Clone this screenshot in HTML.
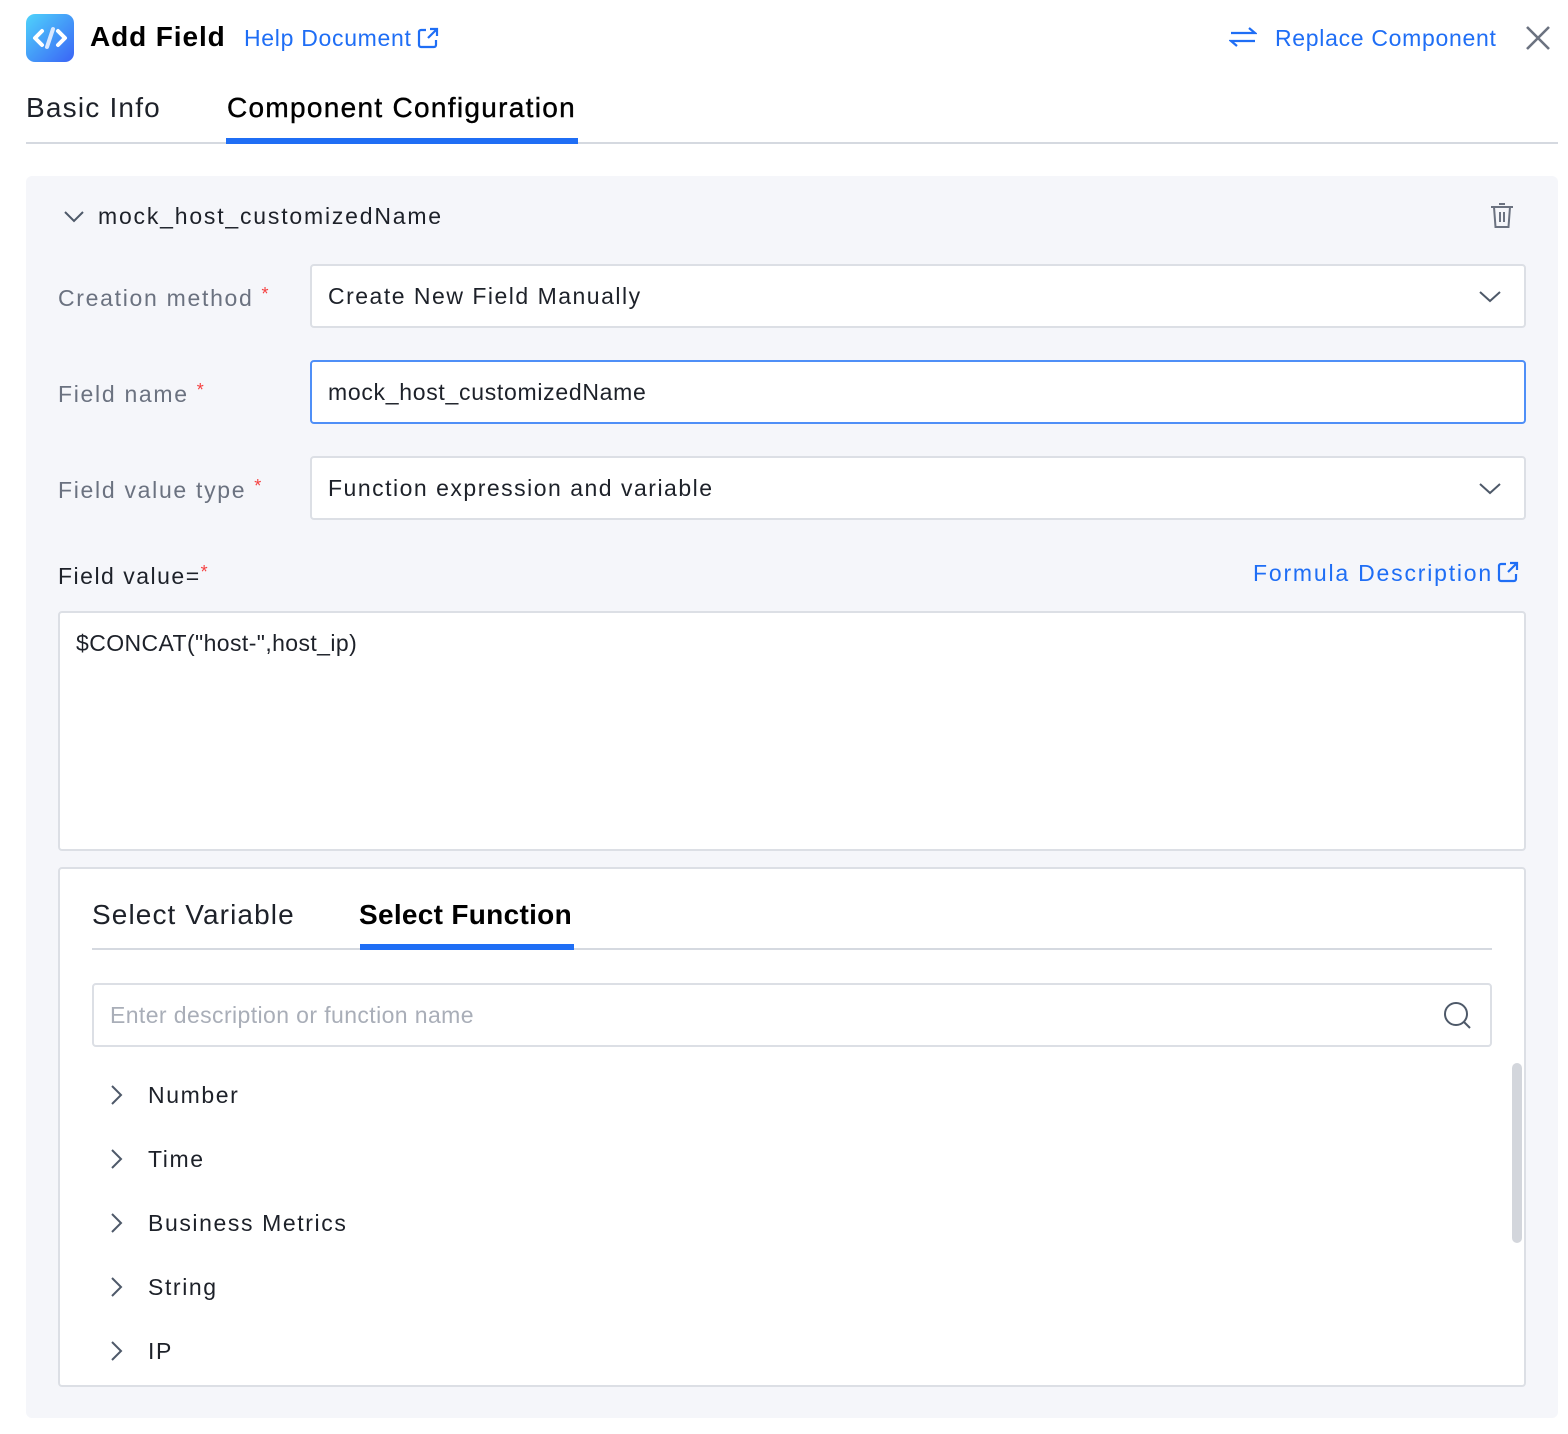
<!DOCTYPE html>
<html><head><meta charset="utf-8"><style>
*{box-sizing:border-box;margin:0;padding:0}
body{width:1568px;height:1434px;background:#fff;font-family:"Liberation Sans",sans-serif;position:relative;overflow:hidden;color:#1d2129}
.a{position:absolute;white-space:nowrap}
.blue{color:#1f6ef5}
.lbl{font-size:23px;color:#6b7280;letter-spacing:1.7px}
.star{color:#f53f3f;font-size:18px;vertical-align:6px;margin-left:8px}
.box{position:absolute;background:#fff;border:2px solid #dcdfe5;border-radius:4px}
.val{font-size:23px;color:#1d2129;letter-spacing:1.5px}
.item{font-size:23px;letter-spacing:1.6px;color:#1d2129}
</style></head><body>
<div class="a" style="left:26px;top:14px;width:48px;height:48px;border-radius:9px;background:linear-gradient(135deg,#4fd3fb,#3a63f6)">
<svg width="48" height="48" viewBox="0 0 48 48"><path d="M16 17 L9 24 L16 31 M32 17 L39 24 L32 31" stroke="#fff" stroke-width="4" fill="none" stroke-linecap="round" stroke-linejoin="round"/><path d="M27 15 L21 33" stroke="#d9e8ff" stroke-width="4" stroke-linecap="round"/></svg></div>
<div class="a" style="left:90px;top:21px;font-size:28px;font-weight:bold;color:#000;letter-spacing:0.9px">Add Field</div>
<div class="a blue" style="left:244px;top:25px;font-size:23px;letter-spacing:0.7px">Help Document</div>
<svg class="a" style="left:417px;top:27px" width="22" height="22" viewBox="0 0 22 22"><path d="M9 3H4a2 2 0 0 0-2 2v13a2 2 0 0 0 2 2h13a2 2 0 0 0 2-2v-5M13 2h7v7M20 2l-9 9" stroke="#1f6ef5" stroke-width="2.2" fill="none"/></svg>
<svg class="a" style="left:1229px;top:26px" width="28" height="22" viewBox="0 0 28 22"><path d="M2 7h24l-6-5M26 15H2l6 5" stroke="#1f6ef5" stroke-width="2.2" fill="none"/></svg>
<div class="a blue" style="left:1275px;top:25px;font-size:23px;letter-spacing:0.7px">Replace Component</div>
<svg class="a" style="left:1524px;top:24px" width="28" height="28" viewBox="0 0 28 28"><path d="M3 3L25 25M25 3L3 25" stroke="#6b7280" stroke-width="2.6"/></svg>
<div class="a" style="left:26px;top:92px;font-size:28px;color:#1d2129;letter-spacing:1.2px">Basic Info</div>
<div class="a" style="left:227px;top:92px;font-size:28px;color:#000;letter-spacing:1.3px;-webkit-text-stroke:0.4px #000">Component Configuration</div>
<div class="a" style="left:26px;top:142px;width:1532px;height:2px;background:#d5d9e0"></div>
<div class="a" style="left:226px;top:138px;width:352px;height:6px;background:#1f6ef5"></div>

<div class="a" style="left:26px;top:176px;width:1532px;height:1242px;background:#f5f6fa;border-radius:6px"></div>
<svg class="a" style="left:63px;top:208px" width="22" height="16" viewBox="0 0 22 16"><path d="M2 4l9 9 9-9" stroke="#4e5969" stroke-width="2" fill="none"/></svg>
<div class="a val" style="left:98px;top:203px;letter-spacing:1.8px">mock_host_customizedName</div>
<svg class="a" style="left:1489px;top:202px" width="26" height="28" viewBox="0 0 26 28"><path d="M2 5h22M10 2h6M5 5l1.5 20h13L21 5M11 10v10M15 10v10" stroke="#6b7280" stroke-width="2" fill="none"/></svg>

<div class="a lbl" style="left:58px;top:284px">Creation method<span class="star">*</span></div>
<div class="box" style="left:310px;top:264px;width:1216px;height:64px"></div>
<div class="a val" style="left:328px;top:283px">Create New Field Manually</div>
<svg class="a" style="left:1478px;top:288px" width="24" height="16" viewBox="0 0 24 16"><path d="M2 4l10 9 10-9" stroke="#4e5969" stroke-width="2" fill="none"/></svg>

<div class="a lbl" style="left:58px;top:380px">Field name<span class="star">*</span></div>
<div class="box" style="left:310px;top:360px;width:1216px;height:64px;border-color:#4f8ff7"></div>
<div class="a val" style="left:328px;top:379px;letter-spacing:0.7px">mock_host_customizedName</div>

<div class="a lbl" style="left:58px;top:476px">Field value type<span class="star">*</span></div>
<div class="box" style="left:310px;top:456px;width:1216px;height:64px"></div>
<div class="a val" style="left:328px;top:475px">Function expression and variable</div>
<svg class="a" style="left:1478px;top:480px" width="24" height="16" viewBox="0 0 24 16"><path d="M2 4l10 9 10-9" stroke="#4e5969" stroke-width="2" fill="none"/></svg>

<div class="a val" style="left:58px;top:562px">Field value=<span style="color:#f53f3f;font-size:18px;vertical-align:6px;letter-spacing:0">*</span></div>
<div class="a blue" style="left:1253px;top:560px;font-size:23px;letter-spacing:1.8px">Formula Description</div>
<svg class="a" style="left:1497px;top:561px" width="22" height="22" viewBox="0 0 22 22"><path d="M9 3H4a2 2 0 0 0-2 2v13a2 2 0 0 0 2 2h13a2 2 0 0 0 2-2v-5M13 2h7v7M20 2l-9 9" stroke="#1f6ef5" stroke-width="2.2" fill="none"/></svg>

<div class="box" style="left:58px;top:611px;width:1468px;height:240px"></div>
<div class="a" style="left:76px;top:630px;font-size:23px;letter-spacing:0.4px">$CONCAT("host-",host_ip)</div>

<div class="box" style="left:58px;top:867px;width:1468px;height:520px"></div>
<div class="a" style="left:92px;top:899px;font-size:28px;letter-spacing:1.1px">Select Variable</div>
<div class="a" style="left:359px;top:899px;font-size:28px;color:#000;font-weight:bold;letter-spacing:0.3px">Select Function</div>
<div class="a" style="left:92px;top:948px;width:1400px;height:2px;background:#d5d9e0"></div>
<div class="a" style="left:360px;top:944px;width:214px;height:6px;background:#1f6ef5"></div>
<div class="box" style="left:92px;top:983px;width:1400px;height:64px"></div>
<div class="a" style="left:110px;top:1002px;font-size:23px;color:#a9aeb8;letter-spacing:0.4px">Enter description or function name</div>
<svg class="a" style="left:1443px;top:1001px" width="30" height="30" viewBox="0 0 30 30"><circle cx="13" cy="13" r="11" stroke="#4e5969" stroke-width="2" fill="none"/><path d="M21 21l6 6" stroke="#4e5969" stroke-width="2"/></svg>
<div class="a" style="left:1512px;top:1063px;width:10px;height:180px;background:#d3d6dc;border-radius:5px"></div>
<svg class="a" style="left:108px;top:1084px" width="16" height="22" viewBox="0 0 16 22"><path d="M4 2l9 9-9 9" stroke="#4e5969" stroke-width="2" fill="none"/></svg>
<div class="a item" style="left:148px;top:1082px">Number</div>
<svg class="a" style="left:108px;top:1148px" width="16" height="22" viewBox="0 0 16 22"><path d="M4 2l9 9-9 9" stroke="#4e5969" stroke-width="2" fill="none"/></svg>
<div class="a item" style="left:148px;top:1146px">Time</div>
<svg class="a" style="left:108px;top:1212px" width="16" height="22" viewBox="0 0 16 22"><path d="M4 2l9 9-9 9" stroke="#4e5969" stroke-width="2" fill="none"/></svg>
<div class="a item" style="left:148px;top:1210px">Business Metrics</div>
<svg class="a" style="left:108px;top:1276px" width="16" height="22" viewBox="0 0 16 22"><path d="M4 2l9 9-9 9" stroke="#4e5969" stroke-width="2" fill="none"/></svg>
<div class="a item" style="left:148px;top:1274px">String</div>
<svg class="a" style="left:108px;top:1340px" width="16" height="22" viewBox="0 0 16 22"><path d="M4 2l9 9-9 9" stroke="#4e5969" stroke-width="2" fill="none"/></svg>
<div class="a item" style="left:148px;top:1338px">IP</div>
</body></html>
